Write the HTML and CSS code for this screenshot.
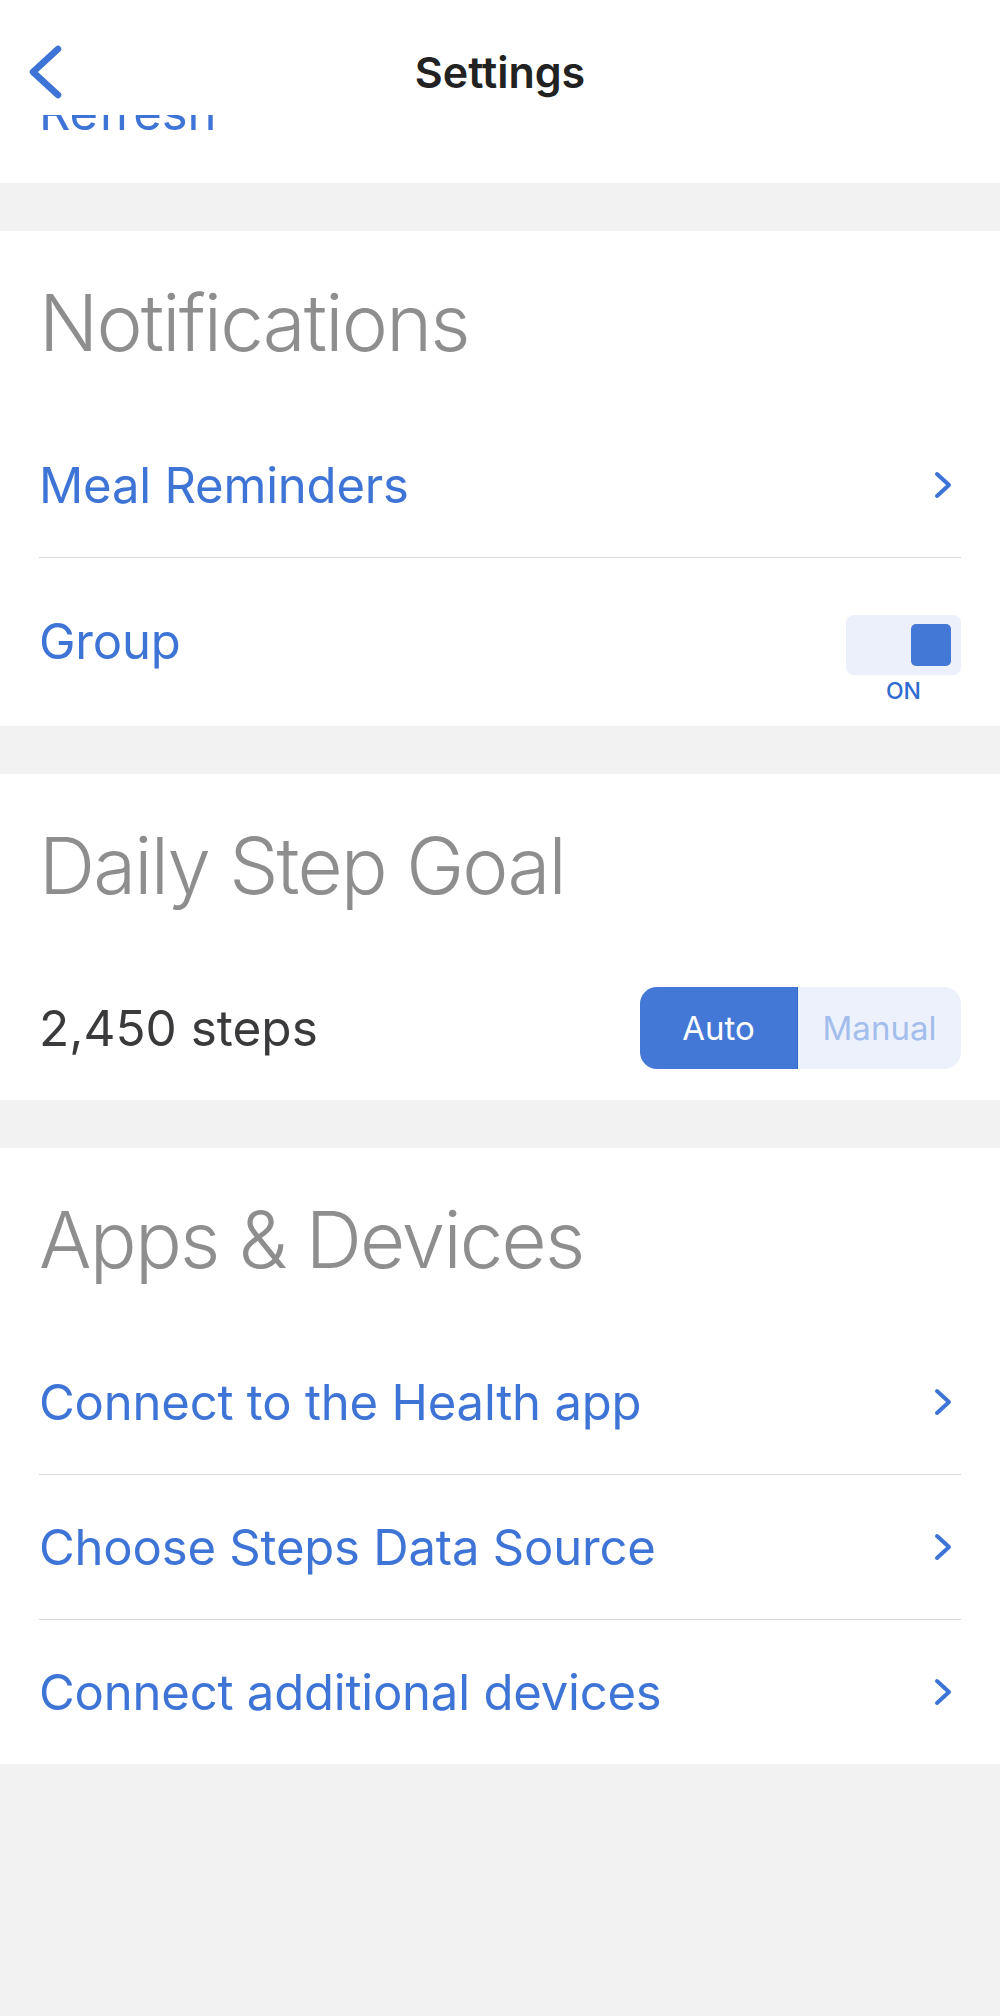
FILE: index.html
```html
<!DOCTYPE html>
<html lang="en">
<head>
    <meta charset="UTF-8">
    <meta name="viewport" content="width=device-width, initial-scale=1.0">
    <title>Settings</title>
    <link rel="stylesheet" href="styles.css">
</head>
<body>
    <header class="navbar">
        <button class="back-button" aria-label="Back">
            <svg width="36" height="56" viewBox="0 0 36 56">
                <path d="M30 5 L5 28 L30 51" fill="none" stroke="#3d74d6" stroke-width="6.5" stroke-linecap="round" stroke-linejoin="round"/>
            </svg>
        </button>
        <h1>Settings</h1>
        <span></span>
    </header>

    <!-- list is scrolled, the top row sits under the nav bar -->
    <div class="scroll-clip">
        <div class="row-link refresh">Refresh</div>
    </div>

    <section class="group">
        <h2>Notifications</h2>
        <div class="row">
            <span class="row-link">Meal Reminders</span>
            <svg class="chevron" width="20" height="30" viewBox="0 0 20 30">
                <path d="M4 4 L16 15 L4 26" fill="none" stroke="#3d74d6" stroke-width="4" stroke-linecap="round" stroke-linejoin="round"/>
            </svg>
        </div>
        <div class="row toggle-row">
            <span class="row-link toggle-label">Group</span>
            <div class="toggle">
                <div class="toggle-track">
                    <div class="toggle-thumb"></div>
                </div>
                <span class="toggle-state">ON</span>
            </div>
        </div>
    </section>

    <section class="group">
        <h2>Daily Step Goal</h2>
        <div class="row steps-row">
            <span class="steps">2,450 steps</span>
            <div class="segmented">
                <button class="segment active">Auto</button>
                <button class="segment">Manual</button>
            </div>
        </div>
    </section>

    <section class="group">
        <h2>Apps &amp; Devices</h2>
        <div class="row">
            <span class="row-link">Connect to the Health app</span>
            <svg class="chevron" width="20" height="30" viewBox="0 0 20 30">
                <path d="M4 4 L16 15 L4 26" fill="none" stroke="#3d74d6" stroke-width="4" stroke-linecap="round" stroke-linejoin="round"/>
            </svg>
        </div>
        <div class="row">
            <span class="row-link">Choose Steps Data Source</span>
            <svg class="chevron" width="20" height="30" viewBox="0 0 20 30">
                <path d="M4 4 L16 15 L4 26" fill="none" stroke="#3d74d6" stroke-width="4" stroke-linecap="round" stroke-linejoin="round"/>
            </svg>
        </div>
        <div class="row">
            <span class="row-link">Connect additional devices</span>
            <svg class="chevron" width="20" height="30" viewBox="0 0 20 30">
                <path d="M4 4 L16 15 L4 26" fill="none" stroke="#3d74d6" stroke-width="4" stroke-linecap="round" stroke-linejoin="round"/>
            </svg>
        </div>
    </section>
</body>
</html>
```

FILE: styles.css
```css
body {
    font-family: "Inter", "Liberation Sans", sans-serif;
    background-color: #f2f2f2;
    margin: 0;
}
.navbar {
    display: grid;
    grid-template-columns: 1fr auto 1fr;
    align-items: center;
    height: 86px;
    padding-top: 29px;
    background-color: white;
}
.back-button {
    justify-self: start;
    display: flex;
    padding: 0;
    margin-left: 28px;
    border: none;
    background: none;
    cursor: pointer;
}
h1 {
    margin: 0;
    font-size: 43px;
    font-weight: 600;
    color: #222222;
}
.scroll-clip {
    height: 68px;
    overflow: hidden;
    padding: 0 39px;
    background-color: white;
}
.refresh {
    margin-top: -32px;
}
.group {
    margin-top: 48px;
    padding: 0 39px;
    background-color: white;
}
h2 {
    display: flex;
    align-items: center;
    height: 182px;
    margin: 0;
    font-size: 78px;
    font-weight: 300;
    letter-spacing: -1.8px;
    color: #8e8e8e;
}
.row {
    display: flex;
    justify-content: space-between;
    align-items: center;
    height: 144px;
}
.row + .row {
    border-top: 1px solid #d6d6d6;
}
.row-link {
    font-size: 49px;
    letter-spacing: -0.2px;
    color: #3d74d6;
}
.chevron {
    margin-right: 8px;
}

/* Group switch */
.toggle-row {
    align-items: flex-start;
    box-sizing: border-box;
    height: 169px;
    padding-top: 57px;
}
.toggle-label {
    line-height: 53px;
}
.toggle {
    display: flex;
    flex-direction: column;
    align-items: center;
}
.toggle-track {
    display: flex;
    justify-content: flex-end;
    align-items: center;
    width: 115px;
    height: 60px;
    box-sizing: border-box;
    padding-right: 10px;
    border-radius: 8px;
    background-color: #ebf0fb;
}
.toggle-thumb {
    width: 40px;
    height: 42px;
    border-radius: 5px;
    background-color: #4478d6;
}
.toggle-state {
    margin-top: 2px;
    font-size: 23px;
    font-weight: 500;
    color: #2f6bd0;
}

/* Step goal */
.steps-row {
    height: 144px;
}
.steps {
    font-size: 49.5px;
    color: #3a3a3c;
}
.segmented {
    display: flex;
    width: 321px;
    height: 82px;
    border-radius: 17px;
    overflow: hidden;
    background-color: #ecf1fb;
}
.segment {
    flex: 1;
    padding: 0;
    border: none;
    font-family: inherit;
    font-size: 33px;
    color: #a3bdec;
    background: none;
}
.segment.active {
    flex: 0 0 158px;
    color: white;
    background-color: #4478d6;
    border-right: 1px solid #2f66cc;
}
```
